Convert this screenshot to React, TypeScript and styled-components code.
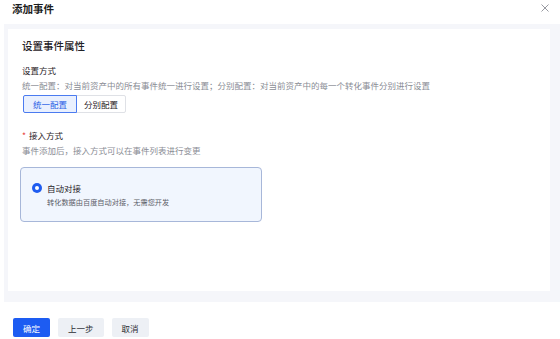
import React, { useState } from 'react';
import styled, { createGlobalStyle } from 'styled-components';

const GlobalStyle = createGlobalStyle`
  html, body {
    margin: 0;
    padding: 0;
    background: #ffffff;
  }
  body {
    font-family: "Noto Sans CJK SC", "Noto Sans", sans-serif;
    color: #1f2126;
  }
`;

const Modal = styled.div`
  width: 560px;
  height: 339px;
  display: flex;
  flex-direction: column;
  background: #fff;
  overflow: hidden;
`;

const Header = styled.div`
  height: 24px;
  padding: 0 10px 0 12px;
  display: flex;
  justify-content: space-between;
  align-items: flex-start;
  box-sizing: border-box;
`;

const Title = styled.div`
  font-size: 10.5px;
  line-height: 17px;
  font-weight: 700;
  color: #1b1c20;
`;

const CloseBtn = styled.button`
  border: none;
  background: none;
  padding: 0;
  margin-top: 3px;
  width: 10px;
  height: 10px;
  cursor: pointer;
  display: flex;
  align-items: center;
  justify-content: center;
`;

const Body = styled.div`
  margin-left: 4px;
  height: 278px;
  padding: 5px 10px 11px 4px;
  box-sizing: border-box;
  background: #f5f6fa;
`;

const Card = styled.div`
  height: 100%;
  background: #fff;
  padding: 10px 14px 0;
  box-sizing: border-box;
`;

const SectionTitle = styled.div`
  font-size: 10.5px;
  line-height: 14px;
  font-weight: 500;
  color: #1f2126;
  margin-bottom: 11px;
`;

const Label = styled.div<{ $required?: boolean }>`
  font-size: 8.5px;
  line-height: 12px;
  color: #1f2126;
  &::before {
    content: ${(p) => (p.$required ? "'*'" : "''")};
    color: #e8453c;
    margin-right: ${(p) => (p.$required ? '3px' : '0')};
  }
`;

const Hint = styled.div`
  font-size: 8.5px;
  line-height: 12px;
  color: #8a8d95;
  margin-top: 3px;
`;

const Segmented = styled.div`
  display: flex;
  margin-top: 4px;
  margin-left: 1px;
`;

const SegButton = styled.button<{ $active?: boolean }>`
  height: 18px;
  padding: 0 ${(p) => (p.$active ? '9px' : '7px')};
  font-family: inherit;
  font-size: 8.5px;
  line-height: 16px;
  border: 1px solid ${(p) => (p.$active ? '#4b7bf0' : '#dfe1e6')};
  background: ${(p) => (p.$active ? '#e9f0fe' : '#ffffff')};
  color: ${(p) => (p.$active ? '#2a5fe6' : '#1f2126')};
  border-radius: ${(p) => (p.$active ? '2px 0 0 2px' : '0 2px 2px 0')};
  margin-left: ${(p) => (p.$active ? '0' : '-1px')};
  position: relative;
  z-index: ${(p) => (p.$active ? 1 : 0)};
  cursor: pointer;
`;

const Field = styled.div`
  margin-top: 16px;
`;

const OptionCard = styled.div`
  margin-top: 11px;
  margin-left: -2px;
  width: 242px;
  height: 55px;
  box-sizing: border-box;
  border: 1px solid #a7b7d9;
  border-radius: 4px;
  background: #f1f6fe;
  padding: 13px 0 0 11px;
  display: flex;
  gap: 5px;
`;

const Radio = styled.span`
  width: 10px;
  height: 10px;
  margin-top: 2px;
  border-radius: 50%;
  background: #1f5cf0;
  display: flex;
  align-items: center;
  justify-content: center;
  flex-shrink: 0;
  &::after {
    content: '';
    width: 4px;
    height: 4px;
    border-radius: 50%;
    background: #fff;
  }
`;

const OptionText = styled.div`
  display: flex;
  flex-direction: column;
`;

const OptionTitle = styled.div`
  font-size: 8.5px;
  line-height: 14px;
  color: #1f2126;
`;

const OptionDesc = styled.div`
  font-size: 7.2px;
  line-height: 10px;
  margin-top: 2px;
  color: #5d6068;
`;

const Footer = styled.div`
  display: flex;
  gap: 8px;
  padding: 16px 0 0 13px;
`;

const FooterButton = styled.button<{ $primary?: boolean }>`
  height: 19px;
  padding: 0 10px;
  min-width: 37px;
  border: none;
  border-radius: 2px;
  font-family: inherit;
  font-size: 8.5px;
  background: ${(p) => (p.$primary ? '#1d5cf2' : '#edf0f5')};
  color: ${(p) => (p.$primary ? '#ffffff' : '#2b2d33')};
  cursor: pointer;
`;

export default function App() {
  const [mode, setMode] = useState<'unified' | 'separate'>('unified');
  return (
    <>
      <GlobalStyle />
      <Modal>
        <Header>
          <Title>添加事件</Title>
          <CloseBtn aria-label="close">
            <svg width="8" height="8" viewBox="0 0 8 8">
              <path d="M0.5 0.5 L7.5 7.5 M7.5 0.5 L0.5 7.5" stroke="#8c8f96" strokeWidth="0.9" />
            </svg>
          </CloseBtn>
        </Header>
        <Body>
          <Card>
            <SectionTitle>设置事件属性</SectionTitle>
            <Label>设置方式</Label>
            <Hint>
              统一配置：对当前资产中的所有事件统一进行设置；分别配置：对当前资产中的每一个转化事件分别进行设置
            </Hint>
            <Segmented>
              <SegButton $active={mode === 'unified'} onClick={() => setMode('unified')}>
                统一配置
              </SegButton>
              <SegButton $active={mode === 'separate'} onClick={() => setMode('separate')}>
                分别配置
              </SegButton>
            </Segmented>
            <Field>
              <Label $required>接入方式</Label>
              <Hint>事件添加后，接入方式可以在事件列表进行变更</Hint>
              <OptionCard>
                <Radio />
                <OptionText>
                  <OptionTitle>自动对接</OptionTitle>
                  <OptionDesc>转化数据由百度自动对接，无需您开发</OptionDesc>
                </OptionText>
              </OptionCard>
            </Field>
          </Card>
        </Body>
        <Footer>
          <FooterButton $primary>确定</FooterButton>
          <FooterButton>上一步</FooterButton>
          <FooterButton>取消</FooterButton>
        </Footer>
      </Modal>
    </>
  );
}
